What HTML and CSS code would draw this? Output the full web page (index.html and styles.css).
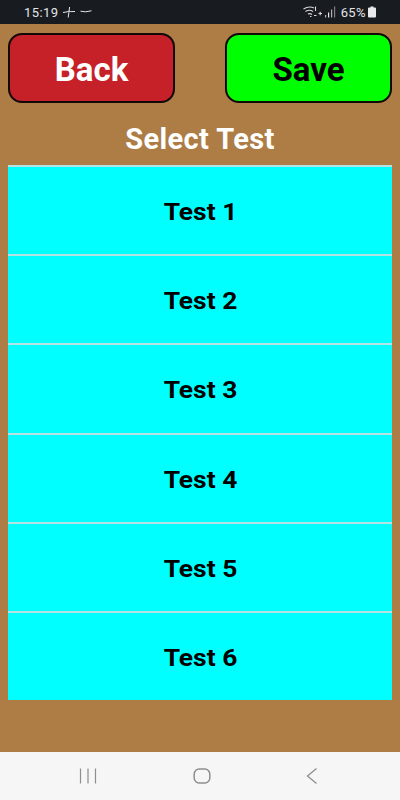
FILE: index.html
```html
<!DOCTYPE html>
<html lang="en">
<head>
    <meta charset="UTF-8">
    <meta name="viewport" content="width=device-width, initial-scale=1.0">
    <title>Select Test</title>
    <link rel="stylesheet" href="styles.css">
</head>
<body>
    <header class="status-bar">
        <div class="status-left">
            <span class="status-text">15:19</span>
            <svg class="status-icon" width="14" height="14" viewBox="0 0 14 14" fill="none" stroke="#e4e6e8" stroke-width="1">
                <path d="M1 7.5 Q6 7 7 6 Q7.5 7 13 6.5 M7.6 2 Q7 7 6.2 12.5"/>
            </svg>
            <svg class="status-icon" width="12" height="14" viewBox="0 0 12 14" fill="none" stroke="#e4e6e8" stroke-width="1">
                <path d="M0.5 6.2 Q5 7.6 11.5 5.8"/>
            </svg>
        </div>
        <div class="status-right">
            <svg class="status-icon" width="20" height="14" viewBox="0 0 20 14" fill="none" stroke="#d8dadc" stroke-width="1.1">
                <path d="M0.5 4 Q6 0.5 11 3 M2.5 6.5 Q6.5 4 10 6.5 M5 9 Q7 8 9 9.5"/>
                <path d="M12.5 1.5 V6 M15.5 8.5 H19 M17.2 6.8 V10.2 M11 10.5 H13.5 M7 11.5 H8.5"/>
            </svg>
            <svg class="status-icon signal" width="11" height="12" viewBox="0 0 11 12" fill="#aeb0b3">
                <rect x="0" y="9" width="1.2" height="2.5"/>
                <rect x="3" y="6.5" width="1.2" height="5" fill="#e4e6e8"/>
                <rect x="6" y="3.5" width="1.2" height="8"/>
                <rect x="9" y="0.5" width="1.2" height="11" fill="#7c7f83"/>
            </svg>
            <span class="status-text">65%</span>
            <svg class="status-icon battery" width="8" height="12" viewBox="0 0 8 12" fill="#e8e9ea">
                <path d="M2.5 0.5 H5.5 V1.5 H7 Q8 1.5 8 2.5 V10.5 Q8 11.5 7 11.5 H1 Q0 11.5 0 10.5 V2.5 Q0 1.5 1 1.5 H2.5 Z"/>
            </svg>
        </div>
    </header>

    <main class="screen">
        <div class="actions">
            <button class="action back">Back</button>
            <button class="action save">Save</button>
        </div>
        <h1 class="title">Select Test</h1>
        <ul class="test-list">
            <li class="test-row"><span class="test-label">Test 1</span></li>
            <li class="test-row"><span class="test-label">Test 2</span></li>
            <li class="test-row"><span class="test-label">Test 3</span></li>
            <li class="test-row"><span class="test-label">Test 4</span></li>
            <li class="test-row"><span class="test-label">Test 5</span></li>
            <li class="test-row"><span class="test-label">Test 6</span></li>
        </ul>
    </main>

    <nav class="nav-bar">
        <svg width="18" height="16" viewBox="0 0 18 16" fill="none" stroke="#8e8e8e" stroke-width="1.2">
            <path d="M1.5 0.5 V15.5 M9 0.5 V15.5 M16.5 0.5 V15.5"/>
        </svg>
        <svg width="18" height="16" viewBox="0 0 18 16" fill="none" stroke="#8e8e8e" stroke-width="1.5">
            <rect x="1.2" y="1" width="15.6" height="14" rx="5"/>
        </svg>
        <svg width="12" height="16" viewBox="0 0 12 16" fill="none" stroke="#8e8e8e" stroke-width="1.3">
            <path d="M10.5 0.5 L1.5 8 L10.5 15.5"/>
        </svg>
    </nav>
</body>
</html>
```
FILE: styles.css
```css
* {
    box-sizing: border-box;
}
body {
    margin: 0;
    width: 400px;
    height: 800px;
    display: flex;
    flex-direction: column;
    font-family: Roboto, "Liberation Sans", sans-serif;
    background: #ad7d45;
    overflow: hidden;
}
.status-bar {
    height: 24px;
    flex: none;
    background: #181b20;
    display: flex;
    justify-content: space-between;
    align-items: center;
    padding: 0 24px 0 24px;
}
.status-left,
.status-right {
    display: flex;
    align-items: center;
}
.status-left {
    gap: 4px;
}
.status-right {
    gap: 2px;
}
.status-text {
    color: #e2e4e6;
    font-size: 13px;
    letter-spacing: 0.4px;
}
.status-icon {
    display: block;
}
.signal {
    margin-right: 3px;
}
.screen {
    flex: 1;
    padding: 9px 8px 0;
}
.actions {
    display: flex;
    justify-content: space-between;
}
.action {
    width: 167px;
    height: 70px;
    border: 2px solid #120808;
    border-radius: 14px;
    font-family: Roboto, "Liberation Sans", sans-serif;
    font-size: 33px;
    font-weight: 700;
    padding: 2px 0 0;
}
.back {
    background: #c62028;
    color: #fff;
}
.save {
    background: #00ff00;
    color: #000;
}
.title {
    margin: 20px 0 9px;
    height: 33px;
    line-height: 33px;
    color: #fff;
    font-size: 29px;
    font-weight: 700;
    letter-spacing: 0.4px;
    text-align: center;
}
.test-list {
    list-style: none;
    margin: 0;
    padding: 0;
}
.test-row {
    height: 89.2px;
    display: flex;
    align-items: center;
    justify-content: center;
    background: #00ffff;
    border-top: 2px solid #b5e3e3;
    color: #000;
    font-size: 24px;
    font-weight: 700;
    padding-top: 3px;
}
.test-label {
    transform: scaleX(1.1);
}
.nav-bar {
    height: 48px;
    flex: none;
    background: #f6f6f6;
    display: flex;
    align-items: center;
    padding: 0 82px 0 79px;
    justify-content: space-between;
}
```
